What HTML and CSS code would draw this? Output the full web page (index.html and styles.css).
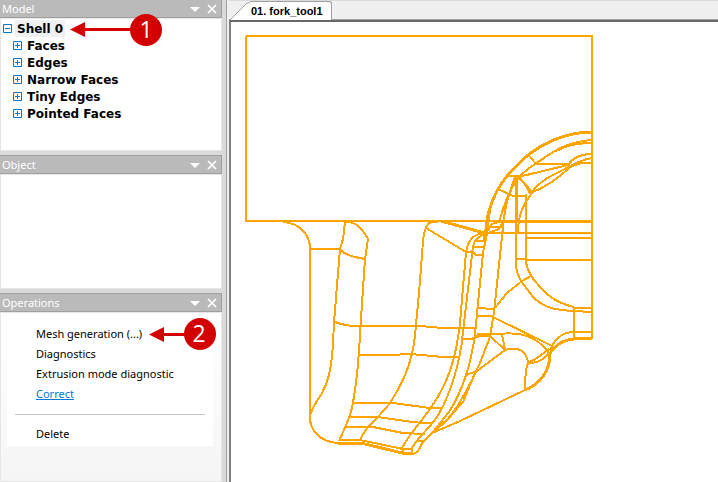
FILE: index.html
```html
<!DOCTYPE html>
<html lang="en">
<head>
<meta charset="utf-8">
<title>01. fork_tool1</title>
<link rel="stylesheet" href="styles.css">
</head>
<body>
<div class="app">
  <aside class="sidebar">
    <section class="panel panel-model">
      <header class="panel-head">
        <h2>Model</h2>
        <button class="icon-btn" aria-label="Model menu"><svg width="10" height="10" viewBox="0 0 10 10"><path d="M0 3H10L5 8Z" fill="#fff"/></svg></button>
        <button class="icon-btn" aria-label="Close Model"><svg width="10" height="10" viewBox="0 0 10 10"><path d="M1 1L9 9M9 1L1 9" stroke="#fff" stroke-width="1.700"/></svg></button>
      </header>
      <div class="panel-body">
        <ul class="tree">
          <li class="row root"><button class="toggle" aria-label="Collapse Shell 0"><svg width="9" height="9" viewBox="0 0 9 9"><path d="M.5 .5H8.500V8.500H.5ZM2 4.500H7"/></svg></button><span class="label selected">Shell 0</span>
            <svg class="callout callout-one" width="93" height="34" viewBox="0 0 93 34"><path class="arrow" d="M0 16.500L15 9V15H62V18H15V24Z"/><circle cx="76" cy="17" r="16"/><text x="76" y="25">1</text></svg>
          </li>
          <li class="row"><button class="toggle" aria-label="Expand Faces"><svg width="9" height="9" viewBox="0 0 9 9"><path d="M.5 .5H8.500V8.500H.5ZM2 4.500H7M4.500 2V7"/></svg></button><span class="label">Faces</span></li>
          <li class="row"><button class="toggle" aria-label="Expand Edges"><svg width="9" height="9" viewBox="0 0 9 9"><path d="M.5 .5H8.500V8.500H.5ZM2 4.500H7M4.500 2V7"/></svg></button><span class="label">Edges</span></li>
          <li class="row"><button class="toggle" aria-label="Expand Narrow Faces"><svg width="9" height="9" viewBox="0 0 9 9"><path d="M.5 .5H8.500V8.500H.5ZM2 4.500H7M4.500 2V7"/></svg></button><span class="label">Narrow Faces</span></li>
          <li class="row"><button class="toggle" aria-label="Expand Tiny Edges"><svg width="9" height="9" viewBox="0 0 9 9"><path d="M.5 .5H8.500V8.500H.5ZM2 4.500H7M4.500 2V7"/></svg></button><span class="label">Tiny Edges</span></li>
          <li class="row"><button class="toggle" aria-label="Expand Pointed Faces"><svg width="9" height="9" viewBox="0 0 9 9"><path d="M.5 .5H8.500V8.500H.5ZM2 4.500H7M4.500 2V7"/></svg></button><span class="label">Pointed Faces</span></li>
        </ul>
      </div>
    </section>
    <section class="panel panel-object">
      <header class="panel-head">
        <h2>Object</h2>
        <button class="icon-btn" aria-label="Object menu"><svg width="10" height="10" viewBox="0 0 10 10"><path d="M0 3H10L5 8Z" fill="#fff"/></svg></button>
        <button class="icon-btn" aria-label="Close Object"><svg width="10" height="10" viewBox="0 0 10 10"><path d="M1 1L9 9M9 1L1 9" stroke="#fff" stroke-width="1.700"/></svg></button>
      </header>
      <div class="panel-body"></div>
    </section>
    <section class="panel panel-operations">
      <header class="panel-head">
        <h2>Operations</h2>
        <button class="icon-btn" aria-label="Operations menu"><svg width="10" height="10" viewBox="0 0 10 10"><path d="M0 3H10L5 8Z" fill="#fff"/></svg></button>
        <button class="icon-btn" aria-label="Close Operations"><svg width="10" height="10" viewBox="0 0 10 10"><path d="M1 1L9 9M9 1L1 9" stroke="#fff" stroke-width="1.700"/></svg></button>
      </header>
      <div class="panel-body">
        <div class="commands">
          <div class="command-row"><button class="command">Mesh generation (...)</button>
            <svg class="callout callout-two" width="68" height="34" viewBox="0 0 68 34"><path class="arrow" d="M0 17.500L15 10V16H38V19H15V25Z"/><circle cx="51" cy="17" r="16"/><text x="50" y="25">2</text></svg>
          </div>
          <div class="command-row"><button class="command">Diagnostics</button></div>
          <div class="command-row"><button class="command">Extrusion mode diagnostic</button></div>
          <div class="command-row"><a class="command link" href="#correct">Correct</a></div>
          <hr>
          <div class="command-row"><button class="command">Delete</button></div>
        </div>
      </div>
    </section>
  </aside>
  <main class="workspace">
    <div class="tabs">
      <svg class="tab-slope" width="21" height="19" viewBox="0 0 21 19"><path d="M1 19L17 3Q19 1 21 1V19Z" fill="#fff"/><path d="M0 18.500H1.500L17 3Q19 1.500 21 1.500" fill="none" stroke="#a0a0a4"/></svg>
      <button class="tab">01. fork_tool1</button>
    </div>
    <div class="viewport">
      <svg class="wireframe" width="487" height="460" viewBox="231 22 487 460" role="img" aria-label="Fork wireframe">
        <!-- shank and straight faces -->
        <path d="M246 36H592V339M246 36V221H592M487 233H592M526 238H592M526 260H592M574 308V339M574 332H592M574 308H592"/>
        <path class="bold" d="M503 221.500H592M574 338.500H592M516 177V221M441 221L488 234"/>
        <path d="M516 221V266M526 194V262M516 259H526"/>
        <!-- left prong -->
        <path d="M283 222C300 223 310 235 310 249V415M310 249H340M345 222L343 239L340 249L334 322L333 344C331 372 328 382 322 393C317 402 314 403 310 415C309 430 320 442 338 443"/>
        <path d="M345 222C357 221 363 230 368 239L365 259L360 334C359 358 356 385 353 403C350 420 344 429 339 441M340 249C344 255 354 257 365 259M335 322C343 325 348 326 356 326H420L443 328H475"/>
        <path d="M438 222C430 221 427 222 424 234Q423 239 422 255L419 293L415 335C412 365 402 384 390 403C378 419 364 427 360 441"/>
        <path d="M426 228L466 252H473L476 255H483M476 241H485M473 247H484"/>
        <path d="M359 355H390L410 354L443 357H460M353 403H393L430 408H441M349 417H378L405 421L422 423H433M346 427H373L403 433L425 434M340 440H360L403 449H412V454M403 448V454"/>
        <path class="bold" d="M338 443H361L402 453H412"/>
        <path d="M412 454C420 453 419 447 423 442L432 433M417 441H423"/>
        <path d="M488 233C473 233 468 240 466 252L460 323C457 350 450 375 441 391C429 415 411 430 402 448"/>
        <path d="M486 234C475 237 473 242 472 255L463 332C460 367 448 399 437 417C429 429 417 438 412 448"/>
        <path d="M490 210L487 233L483 253L475 334C471 365 461 393 449 412L432 433"/>
        <path d="M515 177L510 192C504 203 502 213 499 222M520 176C508 190 505 206 503 227L494 312L490 337L480 363C472 381 463 399 450 417L432 433L443 424L463 402L475 373"/>
        <path d="M477 308L495 309M477 316H493M485 235L492 224Q495 222 504 222M489 227H503M488 233L499 229L503 222"/>
        <!-- lower web -->
        <path d="M493 317L552 346M477 334H500C524 331 540 340 549 353M463 339H471L481 336H490L505 350L477 371L466 375M476 336H491M502 334L505 350C518 346 527 351 528 363Q525 370 525 390L460 421L432 433"/>
        <path d="M528 363Q538 358 549 349M528 363C539 363 544 359 550 352M495 308L507 293L522 281L531 276M550 350C554 340 562 332 574 332"/>
        <path class="bold" d="M574 339C562 340 553 347 550 354C550 371 540 384 525 390"/>
        <!-- central cavity -->
        <path d="M516 266C517 278 524 285 533 297C545 309 557 310 574 311L592 312M526 262C527 270 530 274 534 280C548 297 557 303 574 307"/>
        <path d="M532 193C526 202 518 210 518 233"/>
        <!-- dome -->
        <path class="bold" d="M592 132C563 132 539 146 527 156C506 174 492 192 487 220"/>
        <path d="M487 218L484 240M592 140C562 142 548 156 535 164Q527 169 519 177M592 143C573 143 565 147 556 151M528 154L536 164H568M506 176H519M518 177L568 165C574 156 583 154 592 154M592 158C577 160 565 170 555 174C542 180 536 186 531 193M592 163H581L570 167C557 180 543 188 531 193M518 177Q526 184 530 194M519 177L532 192M498 189L513 196H526"/>
      </svg>
    </div>
  </main>
</div>
</body>
</html>
```

FILE: styles.css
```css
* { box-sizing: border-box; }

body {
  margin: 0;
  font-family: "Noto Sans", sans-serif;
  font-size: 11px;
  color: #000;
  background: #dadada;
}

button {
  margin: 0;
  padding: 0;
  border: 0;
  background: none;
  font: inherit;
  color: inherit;
}

.app {
  display: flex;
  min-height: 100vh;
  border-bottom: 1px solid #dcdcdc;
}

.sidebar {
  display: flex;
  flex-direction: column;
  flex: 0 0 227px;
  gap: 4px;
  padding-right: 4px;
  border-right: 1px solid #a0a0a4;
}

.panel { display: flex; flex-direction: column; }
.panel-model { min-height: 151px; }
.panel-object { min-height: 134px; }
.panel-operations { flex: 1; }

.panel-head {
  display: flex;
  align-items: center;
  gap: 7px;
  height: 19px;
  padding: 0 4px 0 2px;
  border: 1px solid #a0a0a0;
  border-left: 0;
  background: #bababa;
  color: #fff;
}
.panel-model .panel-head { height: 18px; border-top: 0; }

.panel-head h2 {
  flex: 1;
  margin: 0;
  font-size: 11px;
  font-weight: 400;
  line-height: 16px;
}

.icon-btn { display: flex; }

.panel-body {
  flex: 1;
  border: 1px solid #e6e6e6;
  background: #fff;
}

.tree {
  margin: 0;
  padding: 1px 0 0 2px;
  list-style: none;
}

.row {
  position: relative;
  display: flex;
  align-items: center;
  gap: 3px;
  height: 17px;
  padding-left: 10px;
}
.root { padding-left: 0; }

.toggle { display: flex; }
.toggle svg { fill: none; stroke: #0078d7; }

.label {
  padding: 1px 2px 0;
  font-family: "DejaVu Sans", sans-serif;
  font-size: 12px;
  font-weight: 700;
  line-height: 16px;
}
.selected { background: #f0f0f0; }

.callout { position: absolute; fill: #d20000; }
.callout-one { left: 67px; top: -7px; }
.callout-two { left: 134px; top: -7px; }
.callout text {
  fill: #fff;
  font-family: "Open Sans", sans-serif;
  font-size: 23px;
  text-anchor: middle;
}

.panel-operations .panel-body {
  padding: 9px 8px 0 6px;
  background: linear-gradient(#fff, #f5f5f5);
}

.commands {
  padding: 2px 8px;
  background: #fff;
}

.command-row {
  position: relative;
  display: flex;
  align-items: center;
  height: 20px;
  padding-left: 21px;
}

.command { line-height: 16px; white-space: nowrap; }
.link { color: #0078d7; text-decoration: underline; }

.commands hr {
  height: 1px;
  margin: 10px 0 9px;
  border: 0;
  background: #c4c4c4;
}

.workspace {
  display: flex;
  flex: 1;
  flex-direction: column;
  min-width: 0;
  padding-left: 2px;
  background: #f0f0f0;
}

.tabs {
  display: flex;
  align-items: flex-end;
  height: 20px;
  border-top: 1px solid #dadada;
  background: linear-gradient(#a0a0a4, #a0a0a4) 0 18px / 100% 1px no-repeat;
}

.tab-slope { display: block; }

.tab {
  height: 19px;
  padding: 0 8px 0 1px;
  border: solid #a0a0a4;
  border-width: 1px 1px 0 0;
  border-radius: 0 3px 0 0;
  background: #fff;
  font-family: "Liberation Sans", sans-serif;
  font-size: 11px;
  font-weight: 700;
}

.viewport {
  flex: 1;
  overflow: hidden;
  border: 2px solid #696969;
  border-width: 2px 0 0 2px;
  border-left-color: #808080;
  background: #fff;
}

.wireframe {
  display: block;
  fill: none;
  stroke: #ffa500;
  stroke-width: 2;
  shape-rendering: crispEdges;
}
.wireframe .bold { stroke-width: 3; }
```
